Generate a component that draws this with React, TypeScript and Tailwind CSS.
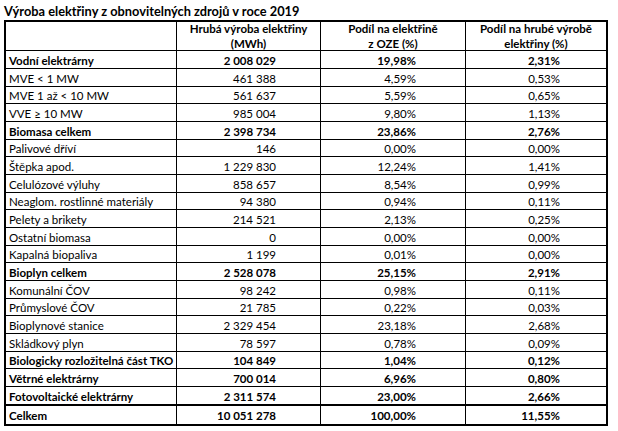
import React from "react";

type Row = { name: string; mwh: string; oze: string; hrube: string; bold?: boolean };

const rows: Row[] = [
  { name: "Vodní elektrárny", mwh: "2 008 029", oze: "19,98%", hrube: "2,31%", bold: true },
  { name: "MVE < 1 MW", mwh: "461 388", oze: "4,59%", hrube: "0,53%" },
  { name: "MVE 1 až < 10 MW", mwh: "561 637", oze: "5,59%", hrube: "0,65%" },
  { name: "VVE ≥ 10 MW", mwh: "985 004", oze: "9,80%", hrube: "1,13%" },
  { name: "Biomasa celkem", mwh: "2 398 734", oze: "23,86%", hrube: "2,76%", bold: true },
  { name: "Palivové dříví", mwh: "146", oze: "0,00%", hrube: "0,00%" },
  { name: "Štěpka apod.", mwh: "1 229 830", oze: "12,24%", hrube: "1,41%" },
  { name: "Celulózové výluhy", mwh: "858 657", oze: "8,54%", hrube: "0,99%" },
  { name: "Neaglom. rostlinné materiály", mwh: "94 380", oze: "0,94%", hrube: "0,11%" },
  { name: "Pelety a brikety", mwh: "214 521", oze: "2,13%", hrube: "0,25%" },
  { name: "Ostatní biomasa", mwh: "0", oze: "0,00%", hrube: "0,00%" },
  { name: "Kapalná biopaliva", mwh: "1 199", oze: "0,01%", hrube: "0,00%" },
  { name: "Bioplyn celkem", mwh: "2 528 078", oze: "25,15%", hrube: "2,91%", bold: true },
  { name: "Komunální ČOV", mwh: "98 242", oze: "0,98%", hrube: "0,11%" },
  { name: "Průmyslové ČOV", mwh: "21 785", oze: "0,22%", hrube: "0,03%" },
  { name: "Bioplynové stanice", mwh: "2 329 454", oze: "23,18%", hrube: "2,68%" },
  { name: "Skládkový plyn", mwh: "78 597", oze: "0,78%", hrube: "0,09%" },
  { name: "Biologicky rozložitelná část TKO", mwh: "104 849", oze: "1,04%", hrube: "0,12%", bold: true },
  { name: "Větrné elektrárny", mwh: "700 014", oze: "6,96%", hrube: "0,80%", bold: true },
  { name: "Fotovoltaické elektrárny", mwh: "2 311 574", oze: "23,00%", hrube: "2,66%", bold: true },
];

function DataRow({ r, tall }: { r: Row; tall: boolean }) {
  const w = r.bold ? "font-bold" : "font-normal";
  const h = tall ? "h-[18px]" : "h-[17px]";
  return (
    <div className={`flex ${h} border-b border-black ${w}`}>
      <div className="w-[171px] border-r border-black pl-[3px] pt-[1px] flex items-center whitespace-nowrap">{r.name}</div>
      <div className="w-[144px] border-r border-black pr-[44px] pt-[1px] flex items-center justify-end">{r.mwh}</div>
      <div className="w-[145px] border-r border-black pr-[49px] pt-[1px] flex items-center justify-end">{r.oze}</div>
      <div className="w-[140px] pr-[46px] pt-[1px] flex items-center justify-end">{r.hrube}</div>
    </div>
  );
}

export default function App() {
  return (
    <div className="w-[618px] h-[431px] bg-white text-black overflow-hidden" style={{ fontFamily: "Lato, 'Open Sans', sans-serif" }}>
      <div className="pl-[4px] pt-[3px] h-[20px] text-[12.8px] font-bold leading-[17px]">
        Výroba elektřiny z obnovitelných zdrojů v roce 2019
      </div>
      <div className="ml-[4px] w-[604px] border-2 border-black text-[11.5px] leading-[13px]">
        <div className="flex h-[29px] border-b border-black font-bold leading-[15px]">
          <div className="w-[171px] border-r border-black"></div>
          <div className="w-[144px] border-r border-black flex flex-col items-center justify-center text-center">
            <span>Hrubá výroba elektřiny</span>
            <span>(MWh)</span>
          </div>
          <div className="w-[145px] border-r border-black flex flex-col items-center justify-center text-center">
            <span>Podíl na elektřině</span>
            <span>z OZE (%)</span>
          </div>
          <div className="w-[140px] flex flex-col items-center justify-center text-center">
            <span>Podíl na hrubé výrobě</span>
            <span>elektřiny (%)</span>
          </div>
        </div>
        {rows.map((r, i) => (
          <DataRow key={i} r={r} tall={i % 3 !== 2} />
        ))}
        <div className="flex h-[19px] border-t border-black font-bold">
          <div className="w-[171px] border-r border-black pl-[3px] pt-[1px] flex items-center">Celkem</div>
          <div className="w-[144px] border-r border-black pr-[44px] pt-[1px] flex items-center justify-end">10 051 278</div>
          <div className="w-[145px] border-r border-black pr-[49px] pt-[1px] flex items-center justify-end">100,00%</div>
          <div className="w-[140px] pr-[46px] pt-[1px] flex items-center justify-end">11,55%</div>
        </div>
      </div>
    </div>
  );
}
